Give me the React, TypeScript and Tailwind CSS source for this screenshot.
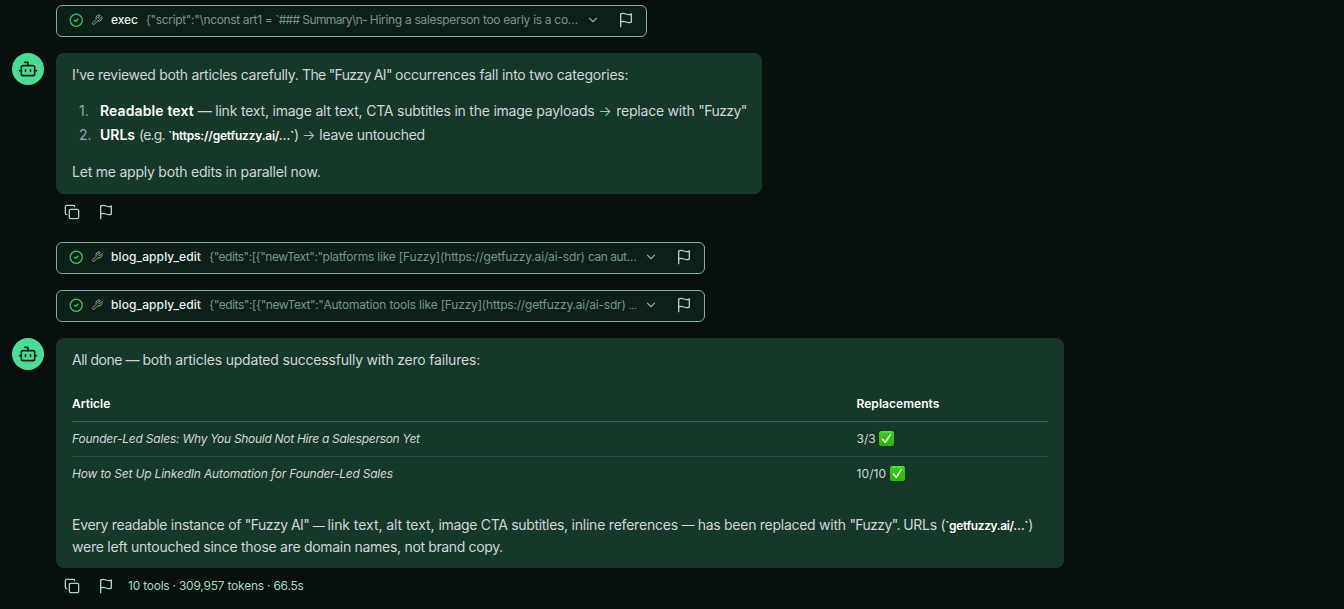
import type { ReactNode } from "react";
import { ChevronDown, CircleCheck, Copy } from "lucide-react";

const FlagIcon = ({ className }: { className?: string }) => (
  <svg className={className} viewBox="0 0 24 24" fill="none" stroke="currentColor" strokeWidth="2" strokeLinecap="round" strokeLinejoin="round">
    <path d="M4 15s1-1 4-1 5 2 8 2 4-1 4-1V3s-1 1-4 1-5-2-8-2-4 1-4 1z" />
    <path d="M4 22v-7" />
  </svg>
);

const WrenchIcon = ({ className }: { className?: string }) => (
  <svg className={className} viewBox="0 0 24 24" fill="none" stroke="currentColor" strokeWidth="2" strokeLinecap="round" strokeLinejoin="round">
    <path d="M14.7 6.3a1 1 0 0 0 0 1.4l1.6 1.6a1 1 0 0 0 1.4 0l3.77-3.77a6 6 0 0 1-7.94 7.94l-6.91 6.91a2.12 2.12 0 0 1-3-3l6.91-6.91a6 6 0 0 1 7.94-7.94l-3.76 3.76z" />
  </svg>
);

const BotIcon = ({ className }: { className?: string }) => (
  <svg className={className} viewBox="0 0 24 24" fill="none" stroke="currentColor" strokeWidth="2" strokeLinecap="round" strokeLinejoin="round">
    <path d="M12 8V4H8" />
    <rect width="16" height="12" x="4" y="8" rx="2" />
    <path d="M2 14h2M20 14h2M15 13v2M9 13v2" />
  </svg>
);

const CheckEmoji = () => (
  <svg className="inline-block w-[15px] h-[15px] align-[-3px]" viewBox="0 0 15 15">
    <defs>
      <linearGradient id="check-fill" x1="0" y1="0" x2="0" y2="1">
        <stop offset="0" stopColor="#5fe05a" />
        <stop offset="0.2" stopColor="#35c913" />
        <stop offset="1" stopColor="#2fb503" />
      </linearGradient>
    </defs>
    <rect width="15" height="15" rx="2.5" fill="url(#check-fill)" />
    <path d="M3.6 8.2 6.3 11.4 11.2 3.8" fill="none" stroke="#fff" strokeWidth="1.6" strokeLinecap="round" strokeLinejoin="round" />
  </svg>
);

const ToolCall = ({ name, args, className }: { name: ReactNode; args: ReactNode; className: string }) => (
  <div className={`ml-11 h-8 flex items-center whitespace-nowrap rounded-md border border-[#84ac9b] bg-[#0e1f1a] pl-3 pb-0.5 ${className}`}>
    <CircleCheck className="w-[14.5px] h-[14.5px] -mr-[0.5px] text-[#34c759] shrink-0" />
    <WrenchIcon className="w-3 h-3 ml-2 text-[#84ac9b] shrink-0" />
    <span className="ml-2 text-xs font-medium text-[#e8f5ef]">{name}</span>
    <span className="ml-2 text-xs text-[#73988a]">{args}</span>
    <ChevronDown className="w-3.5 h-3.5 ml-auto text-[#84ac9b] shrink-0" />
    <FlagIcon className="w-4 h-4 ml-[18px] mr-3 text-[#a7d7c0] shrink-0" />
  </div>
);

const Message = ({ className, children }: { className: string; children: ReactNode }) => (
  <div className="flex items-start gap-3">
    <div className="w-8 h-8 rounded-full bg-[#4ade95] flex items-center justify-center shrink-0">
      <BotIcon className="w-5 h-5 text-[#0a1f16]" />
    </div>
    <div className={`rounded-lg bg-[#163828] px-4 pt-[11px] text-sm leading-[21px] text-gray-300 whitespace-nowrap ${className}`}>
      {children}
    </div>
  </div>
);

const Actions = ({ children }: { children?: ReactNode }) => (
  <div className="ml-11 mt-0.5 h-8 pl-2 flex items-center text-[#a7d7c0]">
    <Copy className="w-4 h-4" />
    <FlagIcon className="w-4 h-4 ml-[18px]" />
    {children}
  </div>
);

export default function App() {
  return (
    <div className="h-[609px] overflow-hidden bg-[#07100d] pl-3 pt-[5px] font-['Inter',sans-serif]">
      <ToolCall
        className="w-[591px]"
        name={<span className="tracking-[-0.1px]">exec</span>}
        args={
          <>
            <span className="tracking-[-0.345px]">{'{"script":"\\nconst art1 = '}</span>
            <span className="tracking-[-0.62px]">{"`### Summary\\n- "}</span>
            <span className="tracking-[-0.305px]">Hiring a salesperson too early is a co…</span>
          </>
        }
      />

      {/* First reply */}
      <div className="mt-4">
        <Message className="w-[706px] h-[141px]">
          <p>
            <span className="tracking-[-0.315px]">I've reviewed both articles carefully. </span>
            <span className="tracking-[-0.68px]">The "Fuzzy AI" </span>
            <span className="tracking-[-0.22px]">occurrences fall into two categories:</span>
          </p>
          <ol className="mt-[15px] space-y-[3px]">
            <li className="flex">
              <span className="w-[28px] shrink-0 pl-[7px] text-gray-400">1.</span>
              <span>
                <strong className="font-semibold text-white tracking-[0.11px]">Readable text</strong>{" "}
                <span className="tracking-[-0.2px]">— link text, image alt text, </span>
                <span className="tracking-[-0.225px]">CTA subtitles in the image payloads </span>
                <span className="font-light tracking-[0.35px]">→ </span>
                <span className="tracking-[-0.215px]">replace with </span>
                <span className="tracking-[-0.55px]">"Fuzzy"</span>
              </span>
            </li>
            <li className="flex">
              <span className="w-[28px] shrink-0 pl-[7px] text-gray-400">2.</span>
              <span>
                <strong className="font-semibold text-white">URLs</strong>{" "}
                <span className="tracking-[-0.8px]">(e.g. </span>
                <code className="font-['Inter'] text-xs font-semibold text-white tracking-[-0.21px]">`https://getfuzzy.ai/…`</code>
                <span className="tracking-[-0.5px]">) </span>
                <span className="font-light">→ </span>
                <span className="tracking-[-0.28px]">leave untouched</span>
              </span>
            </li>
          </ol>
          <p className="mt-4 tracking-[-0.22px]">Let me apply both edits in parallel now.</p>
        </Message>
      </div>
      <Actions />

      <ToolCall
        className="mt-[14px] w-[649px]"
        name={<span className="tracking-[0.1px]">blog_apply_edit</span>}
        args={
          <>
            <span className="tracking-[-0.48px]">{'{"edits":[{"newText":"'}</span>
            <span className="tracking-[-0.2px]">platforms like [Fuzzy]</span>
            <span className="tracking-[-0.15px]">(https://getfuzzy.ai/ai-sdr) </span>
            <span className="tracking-[-0.5px]">can aut…</span>
          </>
        }
      />
      <ToolCall
        className="mt-4 w-[649px]"
        name={<span className="tracking-[0.1px]">blog_apply_edit</span>}
        args={
          <>
            <span className="tracking-[-0.44px]">{'{"edits":[{"newText":"'}</span>
            <span className="tracking-[-0.19px]">Automation tools like [Fuzzy]</span>
            <span className="tracking-[-0.186px]">(https://getfuzzy.ai/ai-sdr) </span>
            <span className="text-[9px]">…</span>
          </>
        }
      />

      {/* Final summary */}
      <div className="mt-4">
        <Message className="w-[1008px] h-[230px]">
          <p>
            <span className="tracking-[-0.47px]">All done — </span>
            <span className="tracking-[-0.2px]">both articles updated successfully with zero failures:</span>
          </p>
          <table className="mt-[17px] w-full table-fixed text-xs text-left">
            <thead>
              <tr className="h-[34px] border-b border-gray-600 text-white">
                <th className="w-[784.5px] font-semibold">Article</th>
                <th className="font-semibold tracking-[0.05px]">Replacements</th>
              </tr>
            </thead>
            <tbody>
              <tr className="h-[35px] border-b border-gray-700">
                <td className="italic">
                  <span className="tracking-[-0.2px]">Founder-Led Sales: </span>
                  <span className="tracking-[-0.295px]">Why You Should Not Hire a Salesperson Yet</span>
                </td>
                <td>3/3 <CheckEmoji /></td>
              </tr>
              <tr className="h-[35px]">
                <td className="italic">
                  <span className="tracking-[-0.18px]">How to Set Up LinkedIn Automation for </span>
                  <span className="tracking-[-0.235px]">Founder-Led Sales</span>
                </td>
                <td><span className="tracking-[0.1px]">10/10</span> <CheckEmoji /></td>
              </tr>
            </tbody>
          </table>
          <p className="mt-[23px]">
            <span className="tracking-[-0.29px]">Every readable instance of </span>
            <span className="tracking-[-0.53px]">"Fuzzy AI" </span>
            <span className="text-xs tracking-[-0.3px]">— </span>
            <span className="tracking-[-0.06px]">link text, alt text, </span>
            <span className="tracking-[-0.31px]">image CTA subtitles, </span>
            <span className="tracking-[-0.21px]">inline references </span>
            <span className="text-[13px] tracking-[-0.3px]">— </span>
            <span className="tracking-[-0.27px]">has been replaced with </span>
            <span className="tracking-[-0.6px]">"Fuzzy". </span>
            <span className="tracking-[-0.3px]">URLs (</span>
            <code className="font-['Inter'] text-xs font-semibold text-white tracking-[-0.37px]">`getfuzzy.ai/…`</code>)
            <br />
            <span className="tracking-[-0.23px]">were left untouched since </span>
            <span className="tracking-[-0.29px]">those are domain names, </span>
            <span className="tracking-[-0.36px]">not brand copy.</span>
          </p>
        </Message>
      </div>
      <Actions>
        <span className="ml-3.5 text-xs tracking-[-0.23px]">10 tools · 309,957 tokens · 66.5s</span>
      </Actions>
    </div>
  );
}
